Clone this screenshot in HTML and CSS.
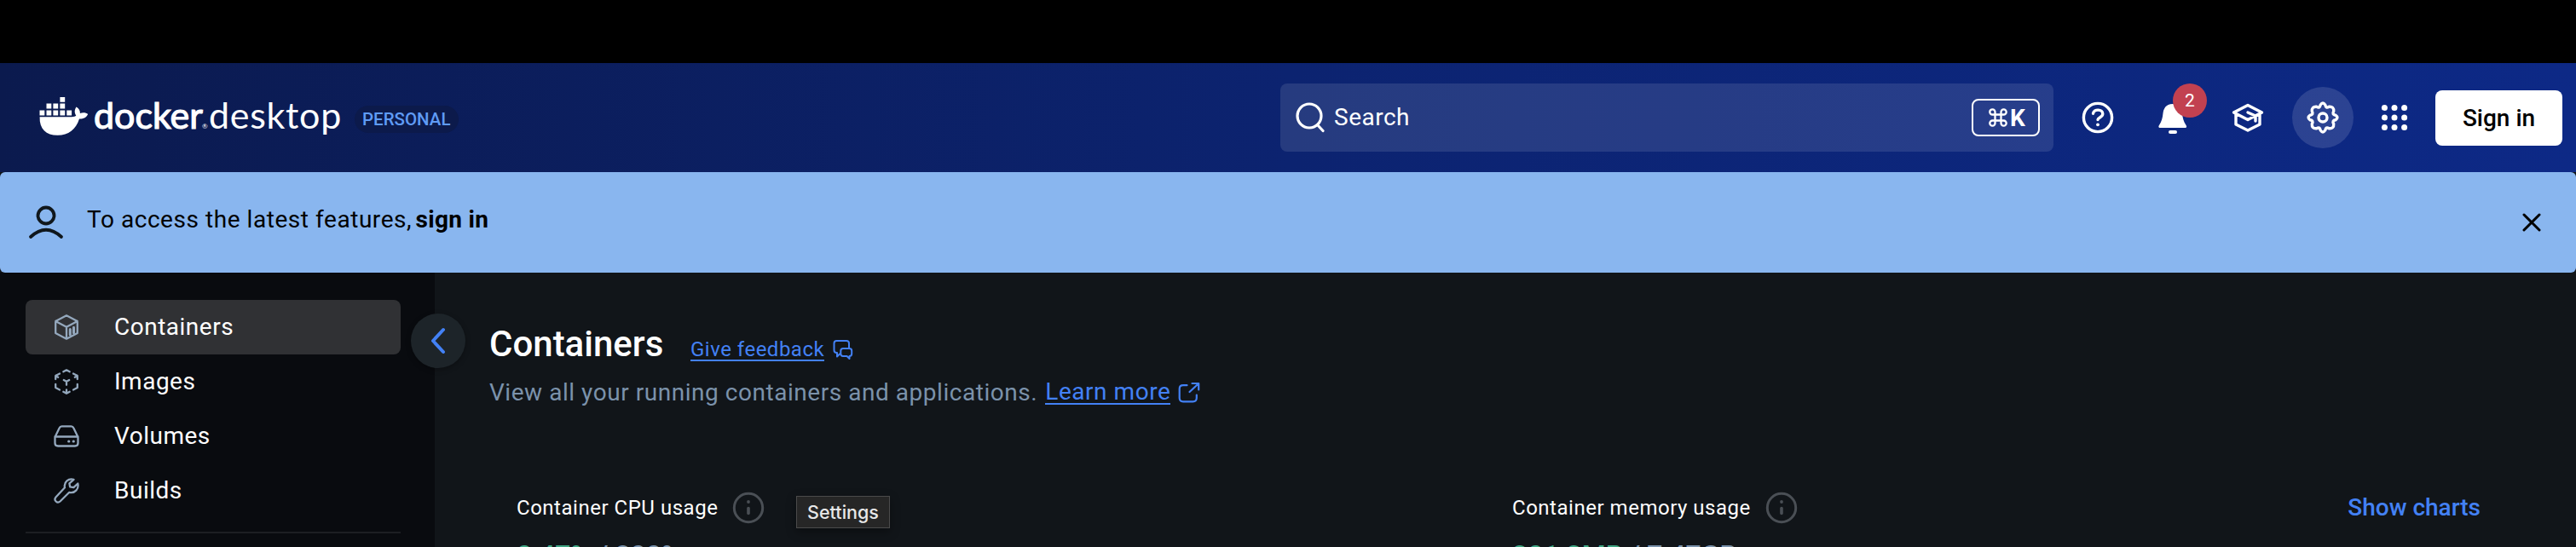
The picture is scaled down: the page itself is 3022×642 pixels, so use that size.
FILE: index.html
```html
<!DOCTYPE html>
<html lang="en">
<head>
<meta charset="utf-8">
<title>Docker Desktop</title>
<link rel="stylesheet" href="styles.css">
</head>
<body>
<header class="topbar">
  <div class="brand">
    <svg class="whale" width="58" height="50" viewBox="0 0 58 50" fill="#fff">
      <path d="M24.4 0h5.8v5.8h-5.8zM8.5 7.6h5.8v5.8H8.5zM16.4 7.6h5.8v5.8h-5.8zM24.4 7.6h5.8v5.8h-5.8zM.5 15.6h5.8v5.8H.5zM8.5 15.6h5.8v5.8H8.5zM16.4 15.6h5.8v5.8h-5.8zM24.4 15.6h5.8v5.8h-5.8zM32.3 15.6h5.8v5.8h-5.8z"/>
      <path d="M.6 23.3H38c2.8 0 4.500-.6 5.300-1.700-2-2.600-2.300-6.500.3-10 3 1.700 4.500 4.300 4.300 7.300 3.800-1.200 7.300-.6 9.300 1.100-1.900 3.900-5.200 5.600-10.200 5.500C43 38 34.500 44.800 21.500 44.800 8 44.800.1 37.500.6 23.300z"/>
    </svg>
    <span class="wordmark"><b>docker</b><i>®</i><span>desktop</span></span>
    <span class="plan">PERSONAL</span>
  </div>
  <div class="search">
    <svg width="34" height="36" viewBox="0 0 34 36" fill="none" stroke="#fff" stroke-width="3.200" stroke-linecap="round"><circle cx="16" cy="16" r="14"/><path d="M26 27l6 6.500"/></svg>
    <span class="search-text">Search</span>
    <span class="key"><svg width="22" height="22" viewBox="0 0 22 22" fill="none" stroke="#fff" stroke-width="2.300"><path d="M7.500 7.500h7v7h-7zM7.500 7.500V4.500a3.100 3.100 0 1 0-3.100 3zM14.500 7.500h3a3.100 3.100 0 1 0-3-3zM14.500 14.500v3a3.100 3.100 0 1 0 3-3zM7.500 14.500h-3a3.100 3.100 0 1 0 3 3z"/></svg>K</span>
  </div>
  <div class="tools">
    <svg class="help" width="38" height="38" viewBox="0 0 38 38" fill="none" stroke="#fff" stroke-width="3.400" stroke-linecap="round"><circle cx="19" cy="19" r="16.600"/><path d="M13.500 14.300c.8-6 11.500-5.300 11.300.5-.1 4-5.800 4.200-5.800 6.700"/><circle cx="19" cy="27.300" r="1.900" fill="#fff" stroke="none"/></svg>
    <div class="bell">
      <svg width="34" height="37" viewBox="0 0 34 37" fill="#fff"><path d="M1.500 30C.2 29.800.1 28.300.8 27.200 4 22.500 5 18 5.500 13 6.200 6 10.500 2 16.700 2s10.700 4 11.300 11c.5 5 1.500 9.500 4.700 14.200.7 1.100.6 2.600-.7 2.800z"/><rect x="12" y="33" width="10" height="4" rx="2"/></svg>
      <span class="badge">2</span>
    </div>
    <svg class="learn" width="38" height="34" viewBox="0 0 38 34" fill="none" stroke="#fff" stroke-width="3.400" stroke-linejoin="round" stroke-linecap="round"><path d="M2.500 11L19 2.500 35.500 11 19 19.500zM5 12.500v12.500l14 7 14-7V12.500M19 11l9 4v6"/></svg>
    <span class="gear"><svg width="38" height="38" viewBox="0 0 38 38" fill="none" stroke="#fff" stroke-width="3.400" stroke-linejoin="round"><circle cx="19" cy="19" r="5"/><path d="M16.200 4.100Q19 0 21.800 4.100Q22.500 8.500 26.300 6.300Q32.200 5.800 31.700 11.700Q29.500 15.500 33.900 16.200Q38 19 33.900 21.800Q29.500 22.500 31.700 26.300Q32.200 32.200 26.300 31.700Q22.500 29.500 21.800 33.900Q19 38 16.200 33.900Q15.500 29.500 11.700 31.700Q5.800 32.200 6.300 26.300Q8.500 22.500 4.100 21.800Q0 19 4.100 16.200Q8.500 15.500 6.300 11.700Q5.800 5.800 11.700 6.300Q15.500 8.500 16.200 4.100z"/></svg></span>
    <svg class="grid" width="32" height="32" viewBox="0 0 32 32" fill="#fff"><circle cx="4.400" cy="4.400" r="3.500"/><circle cx="16" cy="4.400" r="3.500"/><circle cx="27.600" cy="4.400" r="3.500"/><circle cx="4.400" cy="16" r="3.500"/><circle cx="16" cy="16" r="3.500"/><circle cx="27.600" cy="16" r="3.500"/><circle cx="4.400" cy="27.600" r="3.500"/><circle cx="16" cy="27.600" r="3.500"/><circle cx="27.600" cy="27.600" r="3.500"/></svg>
    <button class="signin">Sign in</button>
  </div>
</header>
<div class="banner">
  <svg width="42" height="40" viewBox="0 0 42 40" fill="none" stroke="#10171c" stroke-width="3.800" stroke-linecap="round"><circle cx="21" cy="12" r="9.500"/><path d="M3 37q18-16.500 36 0"/></svg>
  <p class="banner-text">To access the latest features, <b>sign in</b></p>
  <svg class="close" width="22" height="22" viewBox="0 0 22 22" stroke="#000" stroke-width="3" stroke-linecap="round"><path d="M2 2l18 18M20 2L2 20"/></svg>
</div>
<div class="body">
  <nav class="sidebar">
    <a class="item active"><svg width="32" height="32" viewBox="0 0 32 32"><path d="M16 2.300L28.800 9v14L16 29.700 3.200 23V9zM3.200 9L16 15.800 28.800 9M16 15.800v13.900"/><path d="M20.300 18.500v6.500M24.500 16.300v6.500" stroke-width="3"/></svg><span>Containers</span></a>
    <a class="item"><svg width="32" height="32" viewBox="0 0 32 32"><path d="M12.300 4.300L16 2.300l3.700 2M24 6.500l4.800 2.500v4M28.800 9l-3 1.700M8 6.500L3.200 9v4M3.200 9l3 1.700M3.200 19v4L8 25.500M28.800 19v4L24 25.500M12.300 27.800l3.700 2 3.700-2M16 29.500v-4M12.800 14l3.200 1.800 3.200-1.800M16 15.800v4"/></svg><span>Images</span></a>
    <a class="item"><svg width="32" height="32" viewBox="0 0 32 32"><path d="M2.500 17L7.700 6.200Q8.500 4.300 10.500 4.300h11q2 0 2.800 1.900L29.500 17M2.500 16.500h27v7.500q0 3.500-3.500 3.500H6q-3.500 0-3.500-3.500z"/><path d="M18.700 22h.1M24.200 22h.1" stroke-width="3.200"/></svg><span>Volumes</span></a>
    <a class="item"><svg width="32" height="32" viewBox="0 0 32 32"><path d="M24.500 2.800c-6-2-12 3-10.500 9.400L3.500 23.500c-3 3.700 1.700 8 5 5L19.300 17.800c6.500 1.700 11.500-4 10-10.300l-4.900 4.600-4.300-.8-.7-3.900z"/></svg><span>Builds</span></a>
    <hr>
  </nav>
  <main class="content">
    <button class="collapse" aria-label="Collapse"><svg width="18" height="32" viewBox="0 0 18 32" fill="none" stroke="#4381f5" stroke-width="4" stroke-linecap="round" stroke-linejoin="round"><path d="M15 3L3 16l12 13"/></svg></button>
    <div class="heading">
      <h1>Containers</h1>
      <a class="feedback">Give feedback</a>
      <svg width="24" height="24" viewBox="0 0 24 24" fill="none" stroke="#4381f5" stroke-width="2" stroke-linejoin="round"><path d="M8.500 17L5 20.500V16H4.500Q1.500 16 1.500 13V5q0-3 3-3h11.500q3 0 3 3v5.500M12 11h7.500q2.700 0 2.700 2.700v3.600q0 2.700-2.700 2.700v3l-3-3H12q-2.700 0-2.700-2.700v-3.600Q9.300 11 12 11z"/></svg>
    </div>
    <div class="desc">
      <span>View all your running containers and applications.</span>
      <a class="more">Learn more</a>
      <svg width="26" height="26" viewBox="0 0 26 26" fill="none" stroke="#4381f5" stroke-width="2.200" stroke-linecap="round" stroke-linejoin="round"><path d="M10.500 4.200H6Q1.700 4.200 1.700 8.500V19q0 4.300 4.300 4.300h11.500q4.300 0 4.300-4.300v-3.500M16.500 2H24.200v7.500M24 2.200L13.500 12"/></svg>
    </div>
    <div class="stats">
      <section class="stat cpu">
        <div class="label"><span>Container CPU usage</span><svg width="38" height="38" viewBox="0 0 38 38" fill="none" stroke="#4a4f55" stroke-width="3" stroke-linecap="round"><circle cx="19" cy="19" r="16.700"/><path d="M19 19.500v6" stroke-width="3.600"/><circle cx="19" cy="12" r="1.900" fill="#4a4f55" stroke="none"/></svg></div>
        <div class="value"><b>0.47%</b> / 800%</div>
      </section>
      <section class="stat memory">
        <div class="label"><span>Container memory usage</span><svg width="38" height="38" viewBox="0 0 38 38" fill="none" stroke="#4a4f55" stroke-width="3" stroke-linecap="round"><circle cx="19" cy="19" r="16.700"/><path d="M19 19.500v6" stroke-width="3.600"/><circle cx="19" cy="12" r="1.900" fill="#4a4f55" stroke="none"/></svg></div>
        <div class="value"><b>301.3MB</b> / 7.47GB</div>
      </section>
      <a class="charts">Show charts</a>
    </div>
    <div class="tooltip">Settings</div>
  </main>
</div>
</body>
</html>
```
FILE: styles.css
```css
* { box-sizing: border-box; }
body {
  margin: 0;
  width: 3022px;
  height: 642px;
  overflow: hidden;
  display: flex;
  flex-direction: column;
  padding-top: 74px;
  background: linear-gradient(#000 0 74px, #111519 74px);
  color: #fff;
  font-family: Roboto, "Liberation Sans", sans-serif;
  font-size: 28px;
}
svg { display: block; flex: none; }
span, a, p, h1 { white-space: nowrap; }

.topbar {
  flex: none;
  height: 128px;
  display: flex;
  align-items: center;
  padding: 0 16px 0 46px;
  background: linear-gradient(90deg, #0b1a4e, #0c2370 50%, #0d2986);
}
.brand { display: flex; align-items: center; width: 1456px; height: 100%; }
.whale { margin-top: 2px; }
.wordmark {
  display: flex;
  align-items: baseline;
  width: 292px;
  margin: 7px 0 0 5px;
  font-family: Lato, sans-serif;
  font-size: 43px;
  line-height: 50px;
}
.wordmark b { width: 128px; padding-left: 1px; font-weight: 400; letter-spacing: 0; -webkit-text-stroke: 1.2px #fff; }
.wordmark i { width: 11px; font-size: 8px; font-style: normal; }
.wordmark span { letter-spacing: .7px; }
.plan {
  margin: 4px 0 0 15px;
  height: 32px;
  padding: 0 9px;
  border-radius: 16px;
  background: #0c1a4b;
  color: #5f9bf5;
  font-size: 20.5px;
  font-weight: 500;
  line-height: 33px;
}
.search {
  width: 907px;
  height: 80px;
  display: flex;
  align-items: center;
  padding: 0 16px 0 18px;
  border-radius: 8px;
  background: rgba(255,255,255,.11);
}
.search-text { margin: -2px 0 0 11px; flex: 1; letter-spacing: .5px; }
.key {
  display: flex;
  align-items: center;
  width: 80px;
  height: 44px;
  padding-left: 18px;
  gap: 3px;
  border: 2px solid #fff;
  border-radius: 8px;
  font-weight: 700;
}
.tools { display: flex; align-items: center; }
.help { margin-left: 33px; }
.bell { position: relative; margin-left: 52px; }
.badge {
  position: absolute;
  left: 17px;
  top: -22px;
  width: 40px;
  height: 40px;
  border-radius: 50%;
  background: #c24150;
  text-align: center;
  font-size: 21px;
  line-height: 41px;
}
.learn { margin-left: 52px; }
.gear {
  display: grid;
  place-items: center;
  width: 72px;
  height: 72px;
  margin-left: 33px;
  border-radius: 50%;
  background: rgba(255,255,255,.13);
}
.grid { margin-left: 32px; }
.signin {
  width: 149px;
  height: 65px;
  margin-left: 32px;
  padding: 0;
  border: 0;
  border-radius: 8px;
  background: #fff;
  color: #000;
  font: 500 28px Roboto, sans-serif;
}

.banner {
  flex: none;
  height: 118px;
  display: flex;
  align-items: center;
  padding: 0 41px 0 33px;
  border-radius: 6px;
  background: #89b6ef;
  color: #000;
}
.banner-text { margin: -7px auto 0 27px; letter-spacing: .55px; }
.banner-text b { font-weight: 700; letter-spacing: .3px; margin-left: -3px; }

.body { flex: 1; display: flex; min-height: 0; }
.sidebar { flex: none; width: 510px; padding: 32px 40px 0 30px; background: #090b0f; }
.item {
  display: flex;
  align-items: center;
  height: 64px;
  padding-left: 32px;
  border-radius: 8px;
}
.item svg { fill: none; stroke: #94a8bd; stroke-width: 2.3; stroke-linejoin: round; stroke-linecap: round; }
.item span { margin: -2px 0 0 40px; letter-spacing: .5px; }
.item.active { background: #303134; }
hr { margin: 16px 0 0; border: 0; height: 2px; background: #1d1f23; }

.content { position: relative; flex: 1; min-width: 0; padding: 55px 112px 0 64px; }
.collapse {
  position: absolute;
  left: -28px;
  top: 48px;
  width: 64px;
  height: 64px;
  display: grid;
  place-items: center;
  padding: 0;
  border: 0;
  border-radius: 50%;
  background: #1d2429;
  box-shadow: 0 2px 6px rgba(0,0,0,.3);
}
.heading { display: flex; align-items: baseline; height: 58px; }
h1 { margin: 0; width: 236px; font-size: 42px; line-height: 58px; font-weight: 500; }
.feedback, .more { color: #4381f5; border-bottom: 2px solid; }
.feedback { font-size: 24px; line-height: 23px; letter-spacing: .5px; }
.heading svg { margin-left: 10px; transform: translateY(4px); }
.desc { display: flex; align-items: center; height: 54px; color: #7b92ab; letter-spacing: .54px; }
.more { margin-left: 9px; line-height: 27px; }
.desc svg { margin: 2px 0 0 9px; }
.stats { display: flex; margin: 90px 0 0 32px; }
.stat { flex: none; width: 1168px; }
.stat.memory { width: 600px; }
.label { display: flex; align-items: center; height: 38px; font-size: 24px; letter-spacing: .52px; }
.label svg { margin-left: 17px; }
.value { margin-top: 17px; font-size: 32px; line-height: 38px; font-weight: 500; color: #7b92ab; white-space: nowrap; }
.value b { font-weight: 500; color: #3fa583; }
.charts { margin-left: auto; color: #4381f5; font-weight: 500; line-height: 38px; }
.tooltip {
  position: absolute;
  left: 424px;
  top: 262px;
  width: 110px;
  height: 38px;
  border: 1px solid #4b4b4b;
  background: #262626;
  color: #e8e8e8;
  font: 500 21.5px/36px Inter, sans-serif;
  text-align: center;
  box-shadow: 0 4px 12px rgba(0,0,0,.35);
}
```
